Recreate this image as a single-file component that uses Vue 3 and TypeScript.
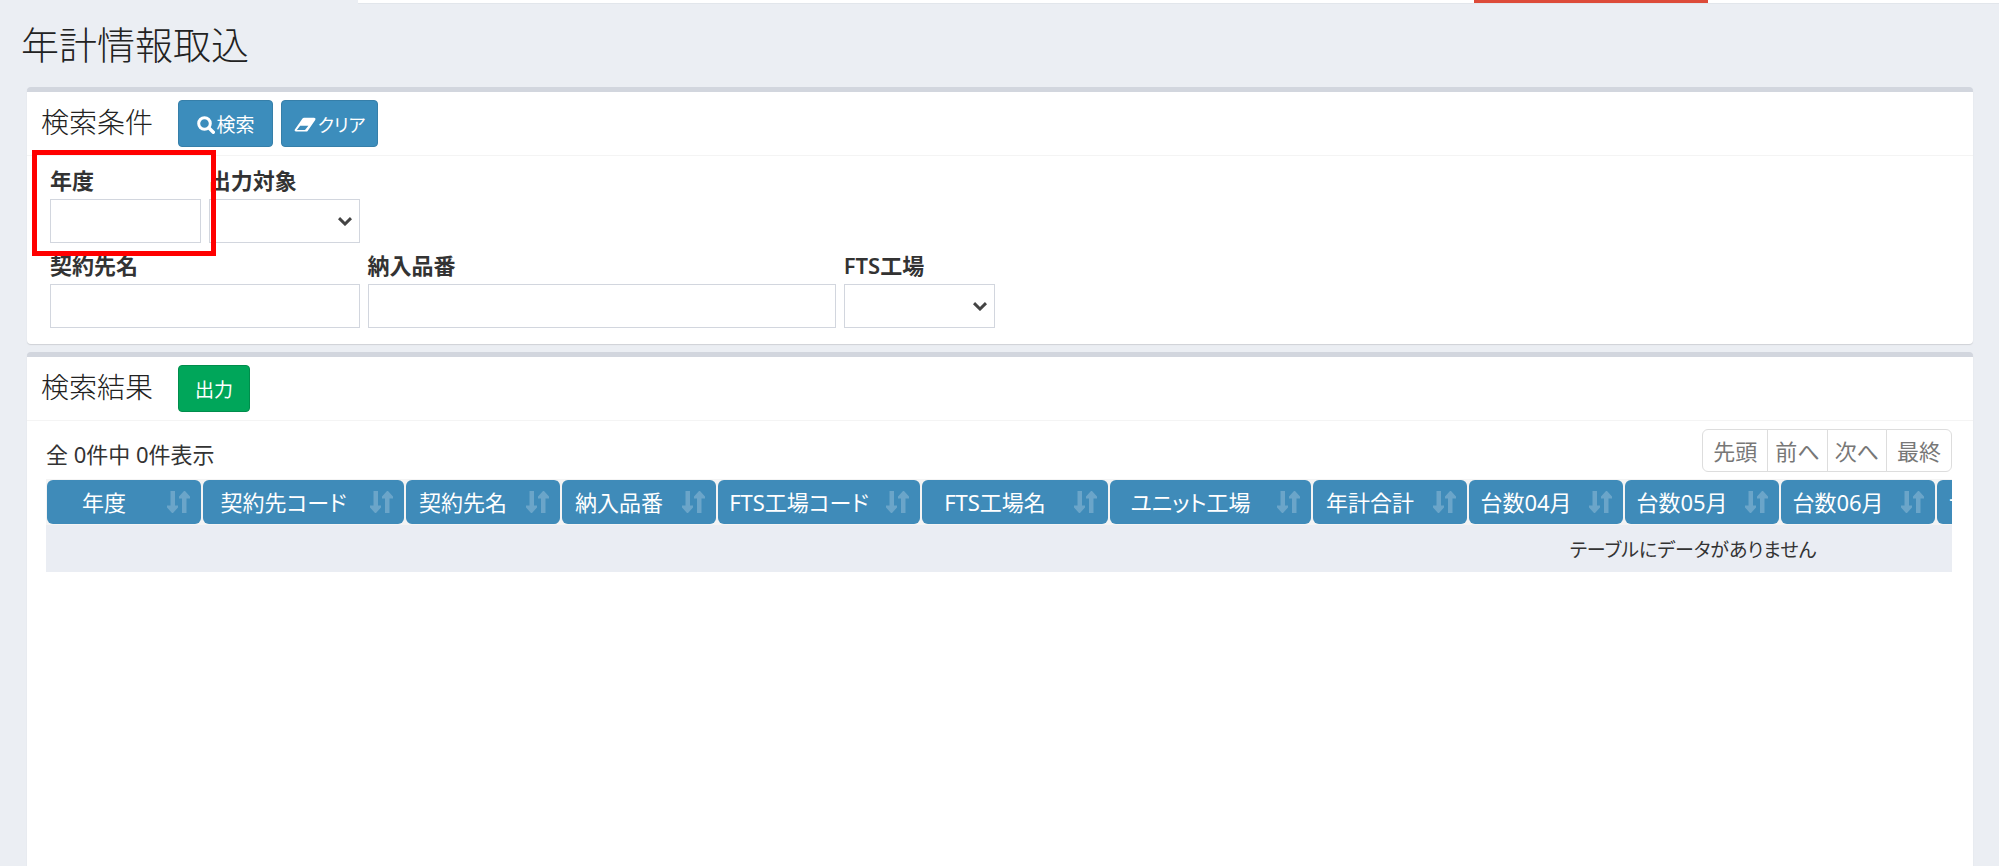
<script setup lang="ts">
import { ref } from 'vue'

interface Column {
  label: string
  width: number
}

const year = ref('')
const target = ref('')
const customer = ref('')
const partNumber = ref('')
const factory = ref('')

const months = ['04', '05', '06', '07', '08', '09', '10', '11', '12', '01', '02', '03']

const columns: Column[] = [
  { label: '年度', width: 156 },
  { label: '契約先コード', width: 203 },
  { label: '契約先名', width: 156 },
  { label: '納入品番', width: 156 },
  { label: 'FTS工場コード', width: 204 },
  { label: 'FTS工場名', width: 188 },
  { label: 'ユニット工場', width: 203 },
  { label: '年計合計', width: 156 },
  ...months.map((m) => ({ label: `台数${m}月`, width: 156 })),
]

const tableWidth = columns.reduce((sum, c) => sum + c.width, 0)
const pages = ['先頭', '前へ', '次へ', '最終']

function clearForm(): void {
  year.value = ''
  target.value = ''
  customer.value = ''
  partNumber.value = ''
  factory.value = ''
}
</script>

<template>
  <div class="page">
    <header class="topbar"><div class="topbar-alert"></div></header>
    <h1 class="page-title">年計情報取込</h1>

    <main class="content">
      <section class="box">
        <div class="box-header">
          <h2 class="box-title">検索条件</h2>
          <button class="btn" type="submit" form="search-form">
            <svg class="icon-search" viewBox="0 0 18 18" aria-hidden="true">
              <circle cx="7.5" cy="7.5" r="5.8" fill="none" stroke="currentColor" stroke-width="3" />
              <path d="M12 12l4.3 4.3" stroke="currentColor" stroke-width="3.4" stroke-linecap="round" />
            </svg>
            <span>検索</span>
          </button>
          <button class="btn btn-clear" type="button" @click="clearForm">
            <svg class="icon-eraser" viewBox="0 0 22 16" aria-hidden="true">
              <path
                fill="currentColor"
                fill-rule="evenodd"
                d="M8.500 1.500Q9.200.8 10 .8H20q2 .2 1.400 1.900l-7.600 11q-.6.9-1.600.9H2Q.1 14.600.7 12.800zM6.200 8.800L3.200 12.400q-.4.6.4.7h7.400l3.400-4.300z"
              />
            </svg>
            <span>クリア</span>
          </button>
        </div>
        <form id="search-form" class="search-form" @submit.prevent>
          <div class="field highlighted">
            <label for="year">年度</label>
            <input id="year" v-model="year" type="text" />
          </div>
          <div class="field">
            <label for="target">出力対象</label>
            <div class="select-wrap">
              <select id="target" v-model="target"><option value=""></option></select>
              <svg class="chevron" viewBox="0 0 14 9" aria-hidden="true"><path d="M1 1.2l6 5.8 6-5.8" /></svg>
            </div>
          </div>
          <div class="field row-start">
            <label for="customer">契約先名</label>
            <input id="customer" v-model="customer" type="text" />
          </div>
          <div class="field span-3">
            <label for="part-number">納入品番</label>
            <input id="part-number" v-model="partNumber" type="text" />
          </div>
          <div class="field">
            <label for="factory">FTS工場</label>
            <div class="select-wrap">
              <select id="factory" v-model="factory"><option value=""></option></select>
              <svg class="chevron" viewBox="0 0 14 9" aria-hidden="true"><path d="M1 1.2l6 5.8 6-5.8" /></svg>
            </div>
          </div>
        </form>
      </section>

      <section class="box results">
        <div class="box-header">
          <h2 class="box-title">検索結果</h2>
          <button class="btn btn-success" type="button">出力</button>
        </div>
        <div class="box-body">
          <div class="toolbar">
            <p class="info">全 0件中 0件表示</p>
            <nav class="pagination" aria-label="ページ">
              <button v-for="p in pages" :key="p" type="button">{{ p }}</button>
            </nav>
          </div>
          <div class="table-scroll">
            <table :style="{ width: tableWidth + 'px' }">
              <colgroup>
                <col v-for="c in columns" :key="c.label" :style="{ width: c.width + 'px' }" />
              </colgroup>
              <thead>
                <tr>
                  <th v-for="c in columns" :key="c.label" scope="col">
                    <div class="head-cell">
                      <span>{{ c.label }}</span>
                      <svg class="sort" viewBox="0 0 23 22" aria-hidden="true">
                        <path d="M3.5 0h4.500v14.500h3v2l-5 5.500h-1l-5-5.500v-2h3.500zM15 22h4.500V7.500H23v-2L18 0h-1l-5 5.500v2h3z" />
                      </svg>
                    </div>
                  </th>
                </tr>
              </thead>
              <tbody>
                <tr><td :colspan="columns.length">テーブルにデータがありません</td></tr>
              </tbody>
            </table>
          </div>
        </div>
      </section>
    </main>
  </div>
</template>

<style>
body {
  margin: 0;
  background: #ebeef3;
}
</style>

<style scoped>
* {
  box-sizing: border-box;
}

.page {
  display: flex;
  flex-direction: column;
  min-height: 100vh;
  color: #333;
  font-family: 'Noto Sans', 'Noto Sans CJK JP', sans-serif;
  font-size: 22px;
  line-height: 28px;
  font-feature-settings: 'palt';
}

.topbar {
  display: flex;
  justify-content: flex-end;
  height: 4px;
  margin-left: 358px;
  padding-right: 291px;
  background: #fff;
  border-bottom: 1px solid #e2e6eb;
}

.topbar-alert {
  width: 234px;
  background: #dd4b39;
}

.page-title {
  margin: 0;
  padding: 18px 21px 21px;
  color: #222;
  font-size: 38px;
  line-height: 44px;
  font-weight: 300;
}

.content {
  display: flex;
  flex: 1;
  flex-direction: column;
  gap: 8px;
  padding: 0 26px 0 27px;
}

.box {
  background: #fff;
  border-top: 5px solid #d2d6de;
  border-radius: 4px;
  box-shadow: 0 1px 1px rgba(0, 0, 0, 0.12);
}

.results {
  flex: 1;
  border-radius: 4px 4px 0 0;
}

.box-header {
  display: flex;
  align-items: center;
  gap: 8px;
  height: 64px;
  padding: 0 14px;
  border-bottom: 1px solid #f4f4f4;
}

.box-title {
  margin: 0 17px 0 0;
  padding-bottom: 4px;
  color: #222;
  font-size: 28px;
  line-height: 36px;
  font-weight: 300;
}

.btn {
  display: flex;
  align-items: center;
  justify-content: center;
  gap: 2px;
  width: 95px;
  height: 47px;
  padding: 2px 0 0;
  border: 1px solid #367fa9;
  border-radius: 4px;
  background: #3c8dbc;
  color: #fff;
  font: inherit;
  font-size: 19px;
  font-feature-settings: inherit;
  white-space: nowrap;
}

.btn-clear {
  width: 97px;
  font-size: 18px;
}

.btn-success {
  width: 72px;
  background: #00a65a;
  border-color: #008d4c;
}

.icon-search {
  width: 18px;
  height: 18px;
}

.icon-eraser {
  width: 22px;
  height: 16px;
}

.search-form {
  display: grid;
  grid-template-columns: repeat(12, 1fr);
  gap: 8px;
  padding: 10px 26px 16px 23px;
}

.field {
  position: relative;
  grid-column: span 1;
  min-width: 0;
}

.row-start {
  grid-column: 1 / span 2;
}

.span-3 {
  grid-column: span 3;
}

.field label {
  display: block;
  margin-bottom: 4px;
  font-weight: 600;
  line-height: 29px;
  white-space: nowrap;
}

.field input,
.field select {
  display: block;
  width: 100%;
  height: 44px;
  padding: 0 12px;
  border: 1px solid #d2d6de;
  border-radius: 0;
  background: #fff;
  color: #555;
  font: inherit;
  appearance: none;
}

.select-wrap {
  position: relative;
}

.chevron {
  position: absolute;
  right: 8px;
  top: 18px;
  width: 14px;
  height: 9px;
  fill: none;
  stroke: #444;
  stroke-width: 3;
  pointer-events: none;
}

.highlighted {
  z-index: 1;
}

.highlighted::after {
  content: '';
  position: absolute;
  inset: -16px -15px -13px -18px;
  border: 5px solid #f00;
  pointer-events: none;
}

.box-body {
  padding: 8px 21px 0 19px;
}

.toolbar {
  display: flex;
  align-items: center;
  justify-content: space-between;
  margin-bottom: 7px;
}

.info {
  margin: 0;
  padding-top: 6px;
}

.pagination {
  display: flex;
}

.pagination button {
  height: 43px;
  margin-left: -1px;
  padding: 0 7px;
  border: 1px solid #ddd;
  background: #fff;
  color: #777;
  font: inherit;
  font-feature-settings: inherit;
}

.pagination button:first-child {
  padding: 0 10px;
  border-radius: 6px 0 0 6px;
}

.pagination button:last-child {
  padding: 0 10px;
  border-radius: 0 6px 6px 0;
}

.table-scroll {
  overflow-x: auto;
  scrollbar-width: none;
}

table {
  table-layout: fixed;
  border-collapse: collapse;
  background: #f4f4f4;
}

th {
  padding: 1px;
  font-weight: 400;
}

.head-cell {
  position: relative;
  height: 44px;
  padding-right: 40px;
  border-radius: 6px;
  background: #3f8bb9;
  color: #fff;
  line-height: 44px;
  text-align: center;
  white-space: nowrap;
}

.sort {
  position: absolute;
  right: 11px;
  top: 11px;
  width: 23px;
  height: 22px;
  fill: #6ba5c9;
}

td {
  height: 47px;
  padding: 2px 0 0;
  background: #eaedf3;
  font-size: 19px;
  text-align: center;
}
</style>
